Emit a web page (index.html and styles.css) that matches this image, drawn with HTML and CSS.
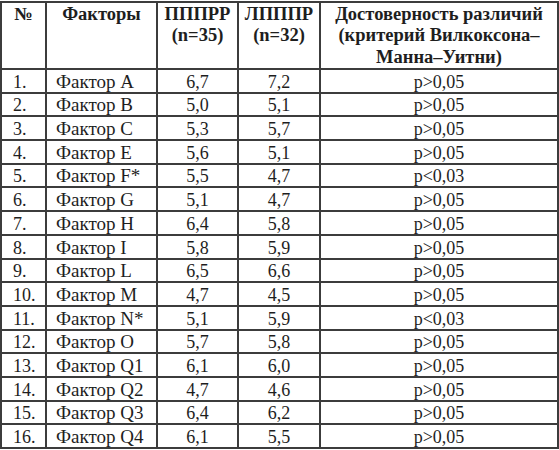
FILE: index.html
```html
<!DOCTYPE html>
<html lang="ru">
<head>
<meta charset="utf-8">
<link rel="stylesheet" href="styles.css">
</head>
<body>
<table class="data">
  <colgroup>
    <col class="c-num">
    <col class="c-factor">
    <col class="c-a">
    <col class="c-b">
    <col class="c-p">
  </colgroup>
  <thead>
    <tr>
      <th>№</th>
      <th>Факторы</th>
      <th>ПППPP<br>(n=35)</th>
      <th>ЛПППР<br>(n=32)</th>
      <th>Достоверность различий<br>(критерий Вилкоксона–<br>Манна–Уитни)</th>
    </tr>
  </thead>
  <tbody>
    <tr><td class="num">1.</td><td class="factor">Фактор A</td><td>6,7</td><td>7,2</td><td>p&gt;0,05</td></tr>
    <tr><td class="num">2.</td><td class="factor">Фактор B</td><td>5,0</td><td>5,1</td><td>p&gt;0,05</td></tr>
    <tr><td class="num">3.</td><td class="factor">Фактор C</td><td>5,3</td><td>5,7</td><td>p&gt;0,05</td></tr>
    <tr><td class="num">4.</td><td class="factor">Фактор E</td><td>5,6</td><td>5,1</td><td>p&gt;0,05</td></tr>
    <tr><td class="num">5.</td><td class="factor">Фактор F*</td><td>5,5</td><td>4,7</td><td>p&lt;0,03</td></tr>
    <tr><td class="num">6.</td><td class="factor">Фактор G</td><td>5,1</td><td>4,7</td><td>p&gt;0,05</td></tr>
    <tr><td class="num">7.</td><td class="factor">Фактор H</td><td>6,4</td><td>5,8</td><td>p&gt;0,05</td></tr>
    <tr><td class="num">8.</td><td class="factor">Фактор I</td><td>5,8</td><td>5,9</td><td>p&gt;0,05</td></tr>
    <tr><td class="num">9.</td><td class="factor">Фактор L</td><td>6,5</td><td>6,6</td><td>p&gt;0,05</td></tr>
    <tr><td class="num">10.</td><td class="factor">Фактор M</td><td>4,7</td><td>4,5</td><td>p&gt;0,05</td></tr>
    <tr><td class="num">11.</td><td class="factor">Фактор N*</td><td>5,1</td><td>5,9</td><td>p&lt;0,03</td></tr>
    <tr><td class="num">12.</td><td class="factor">Фактор O</td><td>5,7</td><td>5,8</td><td>p&gt;0,05</td></tr>
    <tr><td class="num">13.</td><td class="factor">Фактор Q1</td><td>6,1</td><td>6,0</td><td>p&gt;0,05</td></tr>
    <tr><td class="num">14.</td><td class="factor">Фактор Q2</td><td>4,7</td><td>4,6</td><td>p&gt;0,05</td></tr>
    <tr><td class="num">15.</td><td class="factor">Фактор Q3</td><td>6,4</td><td>6,2</td><td>p&gt;0,05</td></tr>
    <tr><td class="num">16.</td><td class="factor">Фактор Q4</td><td>6,1</td><td>5,5</td><td>p&gt;0,05</td></tr>
  </tbody>
</table>
</body>
</html>
```
FILE: styles.css
```css
html, body {
  margin: 0;
  padding: 0;
  background: #ffffff;
}

body {
  padding-top: 1px;
  font-family: "Liberation Serif", "Times New Roman", serif;
  font-size: 18px;
  color: #1e1e1e;
}

.data {
  border-collapse: collapse;
  table-layout: fixed;
  width: 557px;
}

.c-num { width: 45px; }
.c-factor { width: 111px; }
.c-a { width: 81px; }
.c-b { width: 82px; }
.c-p { width: 238px; }

.data th,
.data td {
  border: 2px solid #3c3c3c;
  padding: 0;
  text-align: center;
}

.data thead tr {
  height: 66.7px;
}

.data th {
  font-size: 18.5px;
  font-weight: bold;
  line-height: 21.5px;
  vertical-align: top;
  padding-top: 0.5px;
}

.data tbody tr {
  height: 23.7px;
}

.data td {
  line-height: 20px;
  vertical-align: middle;
  padding-top: 1.7px;
}

.data td.num {
  text-align: left;
  padding-left: 11px;
}

.data td.factor {
  font-size: 19px;
  text-align: left;
  padding-left: 9px;
}
```
